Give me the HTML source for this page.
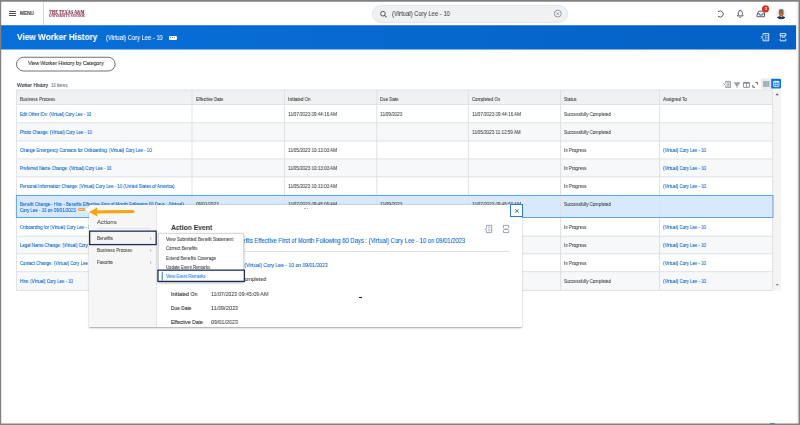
<!DOCTYPE html>
<html><head><meta charset="utf-8"><title>View Worker History</title>
<style>
*{box-sizing:border-box;margin:0;padding:0}
html,body{width:800px;height:425px;overflow:hidden;background:#fff;font-family:"Liberation Sans",sans-serif;color:#333}
#page,#page *{position:absolute}
#page{left:0;top:0;width:800px;height:425px;background:#fff;overflow:hidden;}
.t{white-space:nowrap;line-height:1;will-change:transform}
.g{will-change:transform}
.bd{background:#808080}
</style></head><body>
<div id="page">

<!-- top header -->
<div style="left:8.9px;top:11.0px;width:6.7px;height:0.95px;background:#4a4f57"></div>
<div style="left:8.9px;top:13.0px;width:6.7px;height:0.95px;background:#4a4f57"></div>
<div style="left:8.9px;top:14.9px;width:6.7px;height:0.95px;background:#4a4f57"></div>
<div class="t" style="left:20.00px;top:11px;font-size:5.4px;color:#3b4048;transform:scaleX(0.8819);transform-origin:0 0;font-weight:bold;-webkit-text-stroke:0.07px #3b4048">MENU</div>
<div style="left:43px;top:2px;width:1px;height:23.3px;background:#d3d9e1"></div>
<div class="t" style="left:49.40px;top:10px;font-size:5.7px;color:#7d2040;transform:scaleX(0.7475);transform-origin:0 0;font-weight:bold;font-family:'Liberation Serif',serif;-webkit-text-stroke:0.07px #7d2040">THE TEXAS A&amp;M</div>
<div class="t" style="left:49.40px;top:15px;font-size:3.3px;color:#8a3050;transform:scaleX(1.0181);transform-origin:0 0;font-weight:bold;font-family:'Liberation Serif',serif;-webkit-text-stroke:0.08px #8a3050">UNIVERSITY SYSTEM</div>
<!-- search -->
<svg style="left:370px;top:4px" width="200" height="20" viewBox="370 4 200 20"><rect x="372.400" y="5.600" width="195.100" height="16.800" rx="8.400" fill="#f0f1f3" stroke="#e2e4e7" stroke-width="1"/></svg>
<svg style="left:378px;top:9px" width="10" height="10" viewBox="378 9 10 10"><circle cx="382.900" cy="13.700" r="2.350" fill="none" stroke="#4a4f57" stroke-width="0.950"/><path d="M384.700 15.500L386.100 16.900" stroke="#4a4f57" stroke-width="1.050" stroke-linecap="round"/></svg>
<div class="t" style="left:392.00px;top:11px;font-size:6.6px;color:#454545;transform:scaleX(0.8958);transform-origin:0 0;-webkit-text-stroke:0.07px #454545">(Virtual) Cory Lee - 10</div>
<svg style="left:553px;top:9px" width="10" height="10" viewBox="553 9 10 10"><circle cx="557.800" cy="13.600" r="3.450" fill="none" stroke="#7b8490" stroke-width="0.800"/><path d="M556.800 12.600l2 2M558.800 12.600l-2 2" stroke="#6b7480" stroke-width="0.800"/></svg>
<!-- header right icons -->
<svg style="left:714px;top:4px" width="76" height="20" viewBox="714 4 76 20">
<g fill="none" stroke="#505866" stroke-width="0.950" stroke-linecap="round" stroke-linejoin="round">
<path d="M718.300 11.500A3.100 3.100 0 1 1 718.300 16.500"/>
<path d="M737.500 15.900h5.700l-0.800-1.300v-1.900a2.050 2.050 0 0 0-4.100 0v1.900zM740.350 10.600v-0.400M739.600 17.100a0.800 0.800 0 0 0 1.500 0"/>
<path d="M757.400 13.700l1.300-2.500h4.600l1.300 2.500v3h-7.200zM757.400 13.800h2.300v1.300h2.600v-1.300h2.300"/>
</g>
<circle cx="765.500" cy="8.800" r="3.600" fill="#e0301e"/>
<circle cx="781.200" cy="13.800" r="5.500" fill="#f0f1f2"/>
<clipPath id="av"><circle cx="781.200" cy="13.800" r="5.500"/></clipPath>
<g clip-path="url(#av)">
<ellipse cx="781.200" cy="13" rx="2.500" ry="3.300" fill="#a5623f"/>
<path d="M778.700 11.600a2.500 2.600 0 0 1 5 0l-0.300-0.400a3.200 2 0 0 0-4.400 0z" fill="#6e6a68"/>
<path d="M776.600 19.500c0-2.600 2-3.500 4.600-3.500s4.600 0.900 4.600 3.500z" fill="#27344d"/>
<path d="M780.300 16l0.900 1.200 0.900-1.200z" fill="#f2f2f2"/>
<path d="M780.100 14.500a1.400 0.800 0 0 0 2.200 0z" fill="#f3e9e4"/>
</g>
</svg>
<div class="t" style="left:764.55px;top:8px;font-size:3.4px;color:#fff;transform:scaleX(1.0000);transform-origin:50% 0;font-weight:bold;-webkit-text-stroke:0.07px #fff">3</div>
<!-- blue title bar -->
<svg style="left:0;top:24px" width="800" height="27" viewBox="0 24 800 27"><defs><linearGradient id="bg" x1="0" x2="1" y1="0" y2="0"><stop offset="0" stop-color="#0870da"/><stop offset="1" stop-color="#0561c5"/></linearGradient></defs><rect x="0" y="25.450" width="796.300" height="24.050" fill="url(#bg)"/><rect x="0" y="25.450" width="796.300" height="0.700" fill="#0559b5" opacity="0.700"/></svg>
<div class="t" style="left:16.50px;top:33px;font-size:8.6px;color:#fff;transform:scaleX(0.9656);transform-origin:0 0;font-weight:bold;-webkit-text-stroke:0.07px #fff">View Worker History</div>
<div class="t" style="left:106.00px;top:35px;font-size:6.6px;color:#fff;transform:scaleX(0.8764);transform-origin:0 0;-webkit-text-stroke:0.07px #fff">(Virtual) Cory Lee - 10</div>
<div style="left:168.600px;top:35.500px;width:8.100px;height:4.500px;border-radius:1.200px;background:#fff"></div>
<div style="left:170.1px;top:37.200px;width:1.100px;height:1.100px;border-radius:50%;background:#6a6a6a"></div>
<div style="left:172.1px;top:37.200px;width:1.100px;height:1.100px;border-radius:50%;background:#6a6a6a"></div>
<div style="left:174.1px;top:37.200px;width:1.100px;height:1.100px;border-radius:50%;background:#6a6a6a"></div>
<svg class="g" style="left:756px;top:30px" width="36" height="14" viewBox="756 30 36 14">
<g fill="none" stroke="#fff" stroke-width="0.85" stroke-linejoin="round">
<path d="M763 35.700V33.600h5.700v7.200H763v-2.100"/>
<path d="M780.200 36V33.600h5.600V36M780.200 38.700v2.100h5.600v-2.100"/>
</g>
<path d="M761 36.100l2.100 2.400M763.100 36.100l-2.100 2.400" stroke="#fff" stroke-width="0.600"/>
<path d="M764.700 35.300h3M764.700 37.200h3M764.700 39.100h3" stroke="#cfe2f8" stroke-width="0.900" stroke-dasharray="1.300 0.400"/>
<text x="783" y="38.300" font-size="2.700" font-weight="bold" fill="#fff" text-anchor="middle" font-family="Liberation Sans, sans-serif">PDF</text>
</svg>
<!-- button -->
<svg style="left:14px;top:55px" width="104" height="19" viewBox="14 55 104 19"><rect x="16.500" y="57.250" width="98.600" height="13.750" rx="6.875" fill="#fff" stroke="#6b7079" stroke-width="1"/></svg>
<div class="t" style="left:28.10px;top:61px;font-size:5.8px;color:#333;transform:scaleX(0.8884);transform-origin:0 0;-webkit-text-stroke:0.12px #333">View Worker History by Category</div>
<!-- grid title + toolbar -->
<div class="t" style="left:16.50px;top:83px;font-size:5.0px;color:#333;transform:scaleX(0.9403);transform-origin:0 0;-webkit-text-stroke:0.12px #333">Worker History</div>
<div class="t" style="left:51.25px;top:83px;font-size:5.0px;color:#5f6b7a;transform:scaleX(0.8727);transform-origin:0 0;-webkit-text-stroke:0.07px #5f6b7a">10 items</div>
<svg style="left:720px;top:77px" width="64" height="14" viewBox="720 77 64 14">
<path d="M725.600 83V81.400h5v6.100h-5V85.900" fill="#e3e6e9" stroke="#8a929b" stroke-width="0.800" stroke-linejoin="round"/>
<path d="M727 82.900h2.700M727 84.450h2.700M727 86h2.700" stroke="#9aa2ab" stroke-width="0.800"/>
<path d="M723.500 83.300l2.100 2.300M725.600 83.300l-2.100 2.300" stroke="#7d8690" stroke-width="0.600"/>
<path d="M733.700 82.300h6.800l-2.900 4.300v1.100h-1v-1.100z" fill="#9aa1a9"/>
<rect x="743.500" y="82.400" width="6" height="5" rx="0.500" fill="none" stroke="#7d8690" stroke-width="0.850"/>
<path d="M743.500 83h6" stroke="#7d8690" stroke-width="1.300"/><path d="M746.500 83v4.400" stroke="#7d8690" stroke-width="0.800"/>
<path d="M755.400 82.500h2.200v2.200M755 87.300h-2.200v-2.200" fill="none" stroke="#5f6771" stroke-width="1"/>
<path d="M762.500 78.800h8.800v9.800h-8.800a1.300 1.300 0 0 1-1.300-1.300v-7.200a1.300 1.300 0 0 1 1.300-1.300z" fill="#e9ebee" stroke="#dde0e4" stroke-width="0.400"/>
<rect x="763.100" y="81" width="6.300" height="5.900" fill="#a3abb4"/>
<path d="M765.200 81v5.900M767.300 81v5.900" stroke="#c3c9cf" stroke-width="0.500"/>
<path d="M771.200 78.800h8.500a1.300 1.300 0 0 1 1.300 1.300v7.200a1.300 1.300 0 0 1-1.300 1.300h-8.500z" fill="#0b70de"/>
<rect x="773.600" y="81.300" width="5.400" height="5.300" rx="0.400" fill="none" stroke="#fff" stroke-width="0.700"/>
<path d="M773.600 82h5.400" stroke="#fff" stroke-width="1.200"/>
<path d="M773.600 84.500h5.400M775.400 82.500v4M777.200 82.500v4" stroke="#fff" stroke-width="0.500"/>
</svg>
<!-- worker history table -->
<svg style="left:14px;top:88px" width="770" height="205" viewBox="14 88 770 205">
<rect x="16.400" y="90" width="756.200" height="14.500" fill="#f0f1f2"/>
<rect x="773.100" y="90" width="8.100" height="200.600" fill="#f4f4f4"/>
<rect x="16.400" y="122.8" width="756.200" height="18.2" fill="#f7f8f9"/>
<rect x="16.400" y="158.9" width="756.200" height="17.9" fill="#f7f8f9"/>
<rect x="16.400" y="195.5" width="756.200" height="22.0" fill="#d8e9fb"/>
<rect x="16.400" y="236.2" width="756.200" height="17.6" fill="#f7f8f9"/>
<rect x="16.400" y="271.7" width="756.200" height="18.7" fill="#f7f8f9"/>
<path d="M16.400 90H772.600M16.400 104.5H772.600M16.400 122.8H772.600M16.400 141.0H772.600M16.400 158.9H772.600M16.400 176.8H772.600M16.400 236.2H772.600M16.400 253.8H772.600M16.400 271.7H772.600M16.400 290.4H772.600M16.4 90V290.400M192 90V290.400M284.5 90V290.400M376.8 90V290.400M468.4 90V290.400M560.6 90V290.400M659.5 90V290.400M772.6 90V290.400" fill="none" stroke="#dfe1e4" stroke-width="1"/>
<rect x="16.400" y="195.500" width="756.600" height="22" fill="none" stroke="#5fa3ea" stroke-width="1"/>
<path d="M775.500 95.300l1.700-2 1.700 2z" fill="#555"/><path d="M775.500 284l1.700 2 1.700-2z" fill="#8a8a8a"/>
</svg>
<div class="t" style="left:20.00px;top:97px;font-size:5.0px;color:#3a3a3a;transform:scaleX(0.8800);transform-origin:0 0;-webkit-text-stroke:0.07px #3a3a3a">Business Process</div>
<div class="t" style="left:195.50px;top:97px;font-size:5.0px;color:#3a3a3a;transform:scaleX(0.8800);transform-origin:0 0;-webkit-text-stroke:0.07px #3a3a3a">Effective Date</div>
<div class="t" style="left:287.50px;top:97px;font-size:5.0px;color:#3a3a3a;transform:scaleX(0.8800);transform-origin:0 0;-webkit-text-stroke:0.07px #3a3a3a">Initiated On</div>
<div class="t" style="left:379.50px;top:97px;font-size:5.0px;color:#3a3a3a;transform:scaleX(0.8800);transform-origin:0 0;-webkit-text-stroke:0.07px #3a3a3a">Due Date</div>
<div class="t" style="left:471.50px;top:97px;font-size:5.0px;color:#3a3a3a;transform:scaleX(0.8800);transform-origin:0 0;-webkit-text-stroke:0.07px #3a3a3a">Completed On</div>
<div class="t" style="left:564.00px;top:97px;font-size:5.0px;color:#3a3a3a;transform:scaleX(0.8800);transform-origin:0 0;-webkit-text-stroke:0.07px #3a3a3a">Status</div>
<div class="t" style="left:663.00px;top:97px;font-size:5.0px;color:#3a3a3a;transform:scaleX(0.8800);transform-origin:0 0;-webkit-text-stroke:0.07px #3a3a3a">Assigned To</div>
<div class="t" style="left:20.00px;top:112px;font-size:5.0px;color:#0a62c4;transform:scaleX(0.8555);transform-origin:0 0;-webkit-text-stroke:0.07px #0a62c4">Edit Other IDs: (Virtual) Cory Lee - 10</div>
<div class="t" style="left:287.50px;top:112px;font-size:5.0px;color:#424242;transform:scaleX(0.9050);transform-origin:0 0;-webkit-text-stroke:0.07px #424242">11/07/2023 09:44:16 AM</div>
<div class="t" style="left:379.50px;top:112px;font-size:5.0px;color:#424242;transform:scaleX(0.9050);transform-origin:0 0;-webkit-text-stroke:0.07px #424242">11/09/2023</div>
<div class="t" style="left:471.50px;top:112px;font-size:5.0px;color:#424242;transform:scaleX(0.9050);transform-origin:0 0;-webkit-text-stroke:0.07px #424242">11/07/2023 09:44:16 AM</div>
<div class="t" style="left:564.00px;top:112px;font-size:5.0px;color:#424242;transform:scaleX(0.8800);transform-origin:0 0;-webkit-text-stroke:0.07px #424242">Successfully Completed</div>
<div class="t" style="left:20.00px;top:130px;font-size:5.0px;color:#0a62c4;transform:scaleX(0.8587);transform-origin:0 0;-webkit-text-stroke:0.07px #0a62c4">Photo Change: (Virtual) Cory Lee - 10</div>
<div class="t" style="left:471.50px;top:130px;font-size:5.0px;color:#424242;transform:scaleX(0.9050);transform-origin:0 0;-webkit-text-stroke:0.07px #424242">11/05/2023 11:12:59 AM</div>
<div class="t" style="left:564.00px;top:130px;font-size:5.0px;color:#424242;transform:scaleX(0.8800);transform-origin:0 0;-webkit-text-stroke:0.07px #424242">Successfully Completed</div>
<div class="t" style="left:20.00px;top:148px;font-size:5.0px;color:#0a62c4;transform:scaleX(0.8671);transform-origin:0 0;-webkit-text-stroke:0.07px #0a62c4">Change Emergency Contacts for Onboarding: (Virtual) Cory Lee - 10</div>
<div class="t" style="left:287.50px;top:148px;font-size:5.0px;color:#424242;transform:scaleX(0.9050);transform-origin:0 0;-webkit-text-stroke:0.07px #424242">11/05/2023 10:13:03 AM</div>
<div class="t" style="left:564.00px;top:148px;font-size:5.0px;color:#424242;transform:scaleX(0.8800);transform-origin:0 0;-webkit-text-stroke:0.07px #424242">In Progress</div>
<div class="t" style="left:663.00px;top:148px;font-size:5.0px;color:#0a62c4;transform:scaleX(0.8800);transform-origin:0 0;-webkit-text-stroke:0.07px #0a62c4">(Virtual) Cory Lee - 10</div>
<div class="t" style="left:20.00px;top:166px;font-size:5.0px;color:#0a62c4;transform:scaleX(0.8603);transform-origin:0 0;-webkit-text-stroke:0.07px #0a62c4">Preferred Name Change: (Virtual) Cory Lee - 10</div>
<div class="t" style="left:287.50px;top:166px;font-size:5.0px;color:#424242;transform:scaleX(0.9050);transform-origin:0 0;-webkit-text-stroke:0.07px #424242">11/05/2023 10:13:03 AM</div>
<div class="t" style="left:564.00px;top:166px;font-size:5.0px;color:#424242;transform:scaleX(0.8800);transform-origin:0 0;-webkit-text-stroke:0.07px #424242">In Progress</div>
<div class="t" style="left:663.00px;top:166px;font-size:5.0px;color:#0a62c4;transform:scaleX(0.8800);transform-origin:0 0;-webkit-text-stroke:0.07px #0a62c4">(Virtual) Cory Lee - 10</div>
<div class="t" style="left:20.00px;top:184px;font-size:5.0px;color:#0a62c4;transform:scaleX(0.8745);transform-origin:0 0;-webkit-text-stroke:0.07px #0a62c4">Personal Information Change: (Virtual) Cory Lee - 10 (United States of America)</div>
<div class="t" style="left:287.50px;top:184px;font-size:5.0px;color:#424242;transform:scaleX(0.9050);transform-origin:0 0;-webkit-text-stroke:0.07px #424242">11/05/2023 10:13:03 AM</div>
<div class="t" style="left:564.00px;top:184px;font-size:5.0px;color:#424242;transform:scaleX(0.8800);transform-origin:0 0;-webkit-text-stroke:0.07px #424242">In Progress</div>
<div class="t" style="left:663.00px;top:184px;font-size:5.0px;color:#0a62c4;transform:scaleX(0.8800);transform-origin:0 0;-webkit-text-stroke:0.07px #0a62c4">(Virtual) Cory Lee - 10</div>
<div class="t" style="left:195.50px;top:202px;font-size:5.0px;color:#424242;transform:scaleX(0.9050);transform-origin:0 0;-webkit-text-stroke:0.07px #424242">09/01/2023</div>
<div class="t" style="left:287.50px;top:202px;font-size:5.0px;color:#424242;transform:scaleX(0.9050);transform-origin:0 0;-webkit-text-stroke:0.07px #424242">11/07/2023 09:45:09 AM</div>
<div class="t" style="left:379.50px;top:202px;font-size:5.0px;color:#424242;transform:scaleX(0.9050);transform-origin:0 0;-webkit-text-stroke:0.07px #424242">11/09/2023</div>
<div class="t" style="left:471.50px;top:202px;font-size:5.0px;color:#424242;transform:scaleX(0.9050);transform-origin:0 0;-webkit-text-stroke:0.07px #424242">11/07/2023 09:45:50 AM</div>
<div class="t" style="left:564.00px;top:202px;font-size:5.0px;color:#424242;transform:scaleX(0.8800);transform-origin:0 0;-webkit-text-stroke:0.07px #424242">Successfully Completed</div>
<div class="t" style="left:20.00px;top:225px;font-size:5.0px;color:#0a62c4;transform:scaleX(0.8700);transform-origin:0 0;-webkit-text-stroke:0.07px #0a62c4">Onboarding for (Virtual) Cory Lee - 10</div>
<div class="t" style="left:287.50px;top:225px;font-size:5.0px;color:#424242;transform:scaleX(0.9050);transform-origin:0 0;-webkit-text-stroke:0.07px #424242">11/05/2023 10:13:03 AM</div>
<div class="t" style="left:564.00px;top:225px;font-size:5.0px;color:#424242;transform:scaleX(0.8800);transform-origin:0 0;-webkit-text-stroke:0.07px #424242">In Progress</div>
<div class="t" style="left:663.00px;top:225px;font-size:5.0px;color:#0a62c4;transform:scaleX(0.8800);transform-origin:0 0;-webkit-text-stroke:0.07px #0a62c4">(Virtual) Cory Lee - 10</div>
<div class="t" style="left:20.00px;top:243px;font-size:5.0px;color:#0a62c4;transform:scaleX(0.8700);transform-origin:0 0;-webkit-text-stroke:0.07px #0a62c4">Legal Name Change: (Virtual) Cory Lee - 10</div>
<div class="t" style="left:287.50px;top:243px;font-size:5.0px;color:#424242;transform:scaleX(0.9050);transform-origin:0 0;-webkit-text-stroke:0.07px #424242">11/05/2023 10:13:03 AM</div>
<div class="t" style="left:564.00px;top:243px;font-size:5.0px;color:#424242;transform:scaleX(0.8800);transform-origin:0 0;-webkit-text-stroke:0.07px #424242">In Progress</div>
<div class="t" style="left:663.00px;top:243px;font-size:5.0px;color:#0a62c4;transform:scaleX(0.8800);transform-origin:0 0;-webkit-text-stroke:0.07px #0a62c4">(Virtual) Cory Lee - 10</div>
<div class="t" style="left:20.00px;top:261px;font-size:5.0px;color:#0a62c4;transform:scaleX(0.8700);transform-origin:0 0;-webkit-text-stroke:0.07px #0a62c4">Contact Change: (Virtual) Cory Lee - 10</div>
<div class="t" style="left:287.50px;top:261px;font-size:5.0px;color:#424242;transform:scaleX(0.9050);transform-origin:0 0;-webkit-text-stroke:0.07px #424242">11/05/2023 10:13:03 AM</div>
<div class="t" style="left:564.00px;top:261px;font-size:5.0px;color:#424242;transform:scaleX(0.8800);transform-origin:0 0;-webkit-text-stroke:0.07px #424242">In Progress</div>
<div class="t" style="left:663.00px;top:261px;font-size:5.0px;color:#0a62c4;transform:scaleX(0.8800);transform-origin:0 0;-webkit-text-stroke:0.07px #0a62c4">(Virtual) Cory Lee - 10</div>
<div class="t" style="left:20.00px;top:279px;font-size:5.0px;color:#0a62c4;transform:scaleX(0.8700);transform-origin:0 0;-webkit-text-stroke:0.07px #0a62c4">Hire: (Virtual) Cory Lee - 10</div>
<div class="t" style="left:195.50px;top:279px;font-size:5.0px;color:#424242;transform:scaleX(0.9050);transform-origin:0 0;-webkit-text-stroke:0.07px #424242">09/01/2023</div>
<div class="t" style="left:287.50px;top:279px;font-size:5.0px;color:#424242;transform:scaleX(0.9050);transform-origin:0 0;-webkit-text-stroke:0.07px #424242">11/05/2023 10:13:03 AM</div>
<div class="t" style="left:471.50px;top:279px;font-size:5.0px;color:#424242;transform:scaleX(0.9050);transform-origin:0 0;-webkit-text-stroke:0.07px #424242">11/05/2023 10:13:03 AM</div>
<div class="t" style="left:564.00px;top:279px;font-size:5.0px;color:#424242;transform:scaleX(0.8800);transform-origin:0 0;-webkit-text-stroke:0.07px #424242">Successfully Completed</div>
<div class="t" style="left:663.00px;top:279px;font-size:5.0px;color:#0a62c4;transform:scaleX(0.8800);transform-origin:0 0;-webkit-text-stroke:0.07px #0a62c4">(Virtual) Cory Lee - 10</div>
<div class="t" style="left:20.00px;top:202px;font-size:5.0px;color:#0a62c4;transform:scaleX(0.8764);transform-origin:0 0;-webkit-text-stroke:0.07px #0a62c4">Benefit Change - Hire - Benefits Effective First of Month Following 60 Days : (Virtual)</div>
<div class="t" style="left:20.00px;top:208px;font-size:5.0px;color:#0a62c4;transform:scaleX(0.8756);transform-origin:0 0;-webkit-text-stroke:0.07px #0a62c4">Cory Lee - 10 on 09/01/2023</div>
<div style="left:78.100px;top:208.100px;width:6.500px;height:3.400px;border-radius:1px;background:#f0a044"></div>
<div style="left:79.300px;top:209.400px;width:4.100px;height:0.800px;background:#fbd9ae"></div>
<!-- related actions popup -->
<div style="left:89px;top:204.600px;width:433.400px;height:122.200px;background:#fff;border-radius:0.800px;box-shadow:0 0.300px 1.800px rgba(0,0,0,.36)"></div>
<div style="left:86.500px;top:206.800px;width:4.500px;height:4.500px;background:#fff;transform:rotate(45deg)"></div>
<div style="left:89px;top:204.600px;width:67.500px;height:122.200px;background:#f6f6f7;border-right:0.500px solid #e6e7e9"></div>
<div class="t" style="left:97.10px;top:220px;font-size:5.9px;color:#555;transform:scaleX(1.0192);transform-origin:0 0;-webkit-text-stroke:0.07px #555">Actions</div>
<div style="left:97px;top:227.900px;width:53.700px;height:0.700px;background:#e3e4e7"></div>
<svg style="left:88px;top:229px" width="70" height="18" viewBox="88 229 70 18"><rect x="89.650" y="231.150" width="66.500" height="13.450" fill="#f4f4f5" stroke="#1f2f55" stroke-width="1.300"/></svg>
<div class="t" style="left:96.90px;top:236px;font-size:5.0px;color:#444;transform:scaleX(0.8795);transform-origin:0 0;-webkit-text-stroke:0.07px #444">Benefits</div>
<div class="t" style="left:96.90px;top:248px;font-size:5.0px;color:#444;transform:scaleX(0.8830);transform-origin:0 0;-webkit-text-stroke:0.07px #444">Business Process</div>
<div class="t" style="left:96.90px;top:260px;font-size:5.0px;color:#444;transform:scaleX(0.8800);transform-origin:0 0;-webkit-text-stroke:0.07px #444">Favorite</div>
<svg style="left:149.300px;top:237.1px" width="3" height="3" viewBox="0 0 6 6"><path d="M1.600 0.600L4.400 3L1.600 5.400" fill="none" stroke="#6b7079" stroke-width="0.900"/></svg>
<svg style="left:149.300px;top:249.1px" width="3" height="3" viewBox="0 0 6 6"><path d="M1.600 0.600L4.400 3L1.600 5.400" fill="none" stroke="#6b7079" stroke-width="0.900"/></svg>
<svg style="left:149.300px;top:261.1px" width="3" height="3" viewBox="0 0 6 6"><path d="M1.600 0.600L4.400 3L1.600 5.400" fill="none" stroke="#6b7079" stroke-width="0.900"/></svg>
<!-- popup detail -->
<div class="t" style="left:170.90px;top:224px;font-size:7.3px;color:#333;transform:scaleX(0.9213);transform-origin:0 0;font-weight:bold;-webkit-text-stroke:0.07px #333">Action Event</div>
<div class="t" style="left:129.67px;top:238px;font-size:6.67px;color:#0a62c4;transform:scaleX(0.8800);transform-origin:100% 0;-webkit-text-stroke:0.07px #0a62c4">Benefit Change - Hire - Benefits Effective First of Month Following 60 Days : (Virtual) Cory Lee - 10 on 09/01/2023</div>
<div style="left:171px;top:250.700px;width:339px;height:0.800px;background:#dfe1e4"></div>
<div class="t" style="left:170.90px;top:263px;font-size:5.8px;color:#333;transform:scaleX(0.8800);transform-origin:0 0;-webkit-text-stroke:0.12px #333">Overall Process</div>
<div class="t" style="left:189.40px;top:263px;font-size:5.8px;color:#0a62c4;transform:scaleX(0.8720);transform-origin:100% 0;-webkit-text-stroke:0.07px #0a62c4">Benefit Change: (Virtual) Cory Lee - 10 on 09/01/2023</div>
<div class="t" style="left:170.90px;top:277px;font-size:5.8px;color:#333;transform:scaleX(0.8800);transform-origin:0 0;-webkit-text-stroke:0.12px #333">Overall Status</div>
<div class="t" style="left:210.50px;top:277px;font-size:5.8px;color:#424242;transform:scaleX(0.8905);transform-origin:0 0;-webkit-text-stroke:0.07px #424242">Successfully Completed</div>
<div class="t" style="left:170.90px;top:292px;font-size:5.8px;color:#333;transform:scaleX(0.8868);transform-origin:0 0;-webkit-text-stroke:0.12px #333">Initiated On</div>
<div class="t" style="left:210.50px;top:292px;font-size:5.8px;color:#424242;transform:scaleX(0.9131);transform-origin:0 0;-webkit-text-stroke:0.07px #424242">11/07/2023 09:45:09 AM</div>
<div class="t" style="left:170.90px;top:306px;font-size:5.8px;color:#333;transform:scaleX(0.8367);transform-origin:0 0;-webkit-text-stroke:0.12px #333">Due Date</div>
<div class="t" style="left:210.50px;top:306px;font-size:5.8px;color:#424242;transform:scaleX(0.9478);transform-origin:0 0;-webkit-text-stroke:0.07px #424242">11/09/2023</div>
<div class="t" style="left:170.90px;top:320px;font-size:5.8px;color:#333;transform:scaleX(0.8893);transform-origin:0 0;-webkit-text-stroke:0.12px #333">Effective Date</div>
<div class="t" style="left:210.50px;top:320px;font-size:5.8px;color:#424242;transform:scaleX(0.9340);transform-origin:0 0;-webkit-text-stroke:0.07px #424242">09/01/2023</div>
<div style="left:359.300px;top:297px;width:2.400px;height:0.900px;background:#222"></div>
<div style="left:304.200px;top:208.2px;width:3.700px;height:0.600px;background:repeating-linear-gradient(90deg,#b9bdc3 0,#b9bdc3 0.800px,transparent 0.800px,transparent 1.450px)"></div>
<div style="left:304.200px;top:209.5px;width:3.700px;height:0.600px;background:repeating-linear-gradient(90deg,#b9bdc3 0,#b9bdc3 0.800px,transparent 0.800px,transparent 1.450px)"></div>
<svg class="g" style="left:482px;top:222px" width="30" height="14" viewBox="482 222 30 14">
<g fill="none" stroke="#8a939e" stroke-width="0.850" stroke-linejoin="round">
<path d="M486.400 227.700V225.400h5.300v7.200h-5.300v-2.300"/>
<path d="M503.500 228V225.400h5.200V228M503.500 230.300v2.300h5.200v-2.300"/>
</g>
<path d="M484.700 227.900l2 2.300M486.700 227.900l-2 2.300" stroke="#8a939e" stroke-width="0.600"/>
<path d="M488 227.200h2.600M488 229h2.600M488 230.800h2.600" stroke="#a9b0b8" stroke-width="0.800"/>
<path d="M503.900 229.200h4.400" stroke="#b4bac1" stroke-width="1.300"/>
<text x="506.100" y="230.100" font-size="2.500" font-weight="bold" fill="#7b8490" text-anchor="middle" font-family="Liberation Sans, sans-serif">PDF</text>
</svg>
<div style="left:510px;top:204.300px;width:12.700px;height:13.200px;background:#fff;border:1.100px solid #2f78d0"></div>
<svg style="left:513.500px;top:208px" width="5.800" height="5.800" viewBox="0 0 10 10"><path d="M1.800 1.800L8.200 8.200M8.200 1.800L1.800 8.200" stroke="#1d66c4" stroke-width="1.500"/></svg>
<!-- benefits submenu -->
<div style="left:158px;top:233px;width:85.900px;height:49.200px;background:#fff;border:0.500px solid #d9dadc;box-shadow:0 0.500px 2.500px rgba(0,0,0,.3)"></div>
<div class="t" style="left:165.60px;top:237px;font-size:5.0px;color:#424242;transform:scaleX(0.8853);transform-origin:0 0;-webkit-text-stroke:0.07px #424242">View Submitted Benefit Statement</div>
<div class="t" style="left:165.60px;top:246px;font-size:5.0px;color:#424242;transform:scaleX(0.8756);transform-origin:0 0;-webkit-text-stroke:0.07px #424242">Correct Benefits</div>
<div class="t" style="left:165.60px;top:256px;font-size:5.0px;color:#424242;transform:scaleX(0.8607);transform-origin:0 0;-webkit-text-stroke:0.07px #424242">Extend Benefits Coverage</div>
<div class="t" style="left:165.60px;top:265px;font-size:5.0px;color:#424242;transform:scaleX(0.8510);transform-origin:0 0;-webkit-text-stroke:0.07px #424242">Update Event Remarks</div>
<svg style="left:156px;top:268px" width="91" height="16" viewBox="156 268 91 16"><rect x="157.950" y="270.150" width="86.400" height="11.250" fill="#fff" stroke="#1f2f55" stroke-width="1.300"/><rect x="161.700" y="271.800" width="1.100" height="8.800" fill="#3a8ae0"/></svg>
<div class="t" style="left:165.60px;top:274px;font-size:5.0px;color:#2180e4;transform:scaleX(0.8548);transform-origin:0 0;-webkit-text-stroke:0.07px #2180e4">View Event Remarks</div>
<!-- orange arrow annotation -->
<svg style="left:86px;top:204px" width="52" height="16" viewBox="86 204 52 16"><path d="M89 212L97.200 207.400V210.300L133 209.900a1.550 1.550 0 0 1 0 3.100L97.200 213.600V216.600z" fill="#f5a70f"/></svg>
<!-- outer screenshot frame -->
<svg style="left:0;top:0" width="800" height="425" viewBox="0 0 800 425">
<rect x="796.300" y="1.800" width="2.300" height="421.600" fill="#f4f4f4"/>
<path d="M0 0H800V425H0zM1.200 1.800V423.400H798.500V1.800z" fill="#808080" fill-rule="evenodd"/>
<rect x="770" y="423.100" width="5" height="1" rx="0.500" fill="#4a86c8"/>
</svg>
</div>
</body></html>
